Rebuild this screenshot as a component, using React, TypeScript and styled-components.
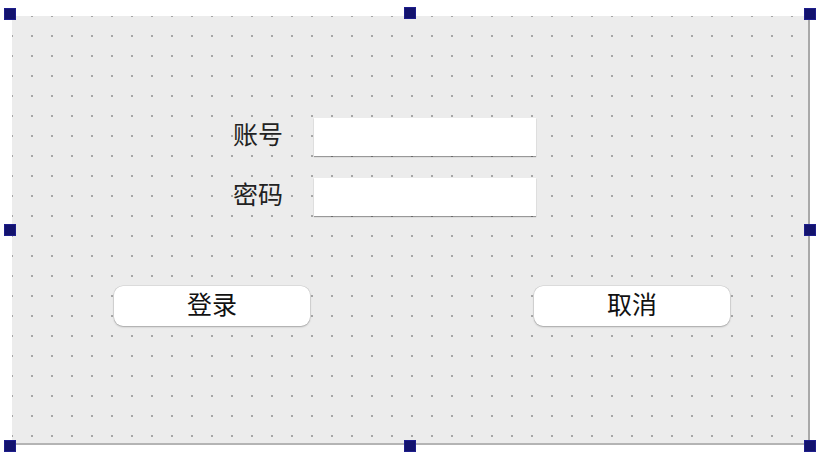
import React from "react";
import styled, { createGlobalStyle } from "styled-components";

const GlobalStyle = createGlobalStyle`
  html, body {
    margin: 0;
    padding: 0;
    background: #ffffff;
  }
  body {
    font-family: "Noto Sans CJK SC", "Noto Sans", sans-serif;
  }
`;

const Stage = styled.div`
  position: relative;
  width: 826px;
  height: 464px;
  overflow: hidden;
  background: #ffffff;
`;

const Form = styled.div`
  margin: 16px 0 0 12px;
  width: 798px;
  height: 429px;
  box-sizing: border-box;
  border-right: 2px solid #a9a9a9;
  border-bottom: 2px solid #b4b4b4;
  background-color: #ececec;
  background-image: radial-gradient(circle, #a6a6a6 0.9px, transparent 1.4px);
  background-size: 20px 20px;
  background-position: -10px -10px;
  padding: 102px 0 0 102px;
`;

const Fields = styled.div`
  display: grid;
  grid-template-columns: 170px 222px;
  column-gap: 30px;
  row-gap: 22px;
  align-items: center;
`;

const Label = styled.div`
  justify-self: end;
  font-size: 25px;
  line-height: 32px;
  color: #222222;
  margin-top: -9px;
  margin-right: 1px;
`;

const Input = styled.div`
  height: 38px;
  background: #ffffff;
  box-shadow: 0 1px 1px rgba(0, 0, 0, 0.35);
`;

const Buttons = styled.div`
  display: flex;
  gap: 224px;
  margin-top: 70px;
`;

const Button = styled.div`
  width: 196px;
  height: 40px;
  border-radius: 9px;
  background: #ffffff;
  box-shadow: 0 0 0 0.5px rgba(0, 0, 0, 0.12), 0 1px 2px rgba(0, 0, 0, 0.25);
  display: flex;
  align-items: center;
  justify-content: center;
  font-size: 25px;
  color: #111111;
  padding-bottom: 7px;
  box-sizing: border-box;
`;

const Handle = styled.div<{ $x: number; $y: number }>`
  position: absolute;
  left: ${(p) => p.$x}px;
  top: ${(p) => p.$y}px;
  width: 12px;
  height: 12px;
  background: #13136e;
  box-shadow: inset 0 0 0 1px #1e1e8c;
`;

const handles = [
  [4, 8],
  [404, 7],
  [804, 8],
  [4, 224],
  [804, 224],
  [4, 440],
  [404, 440],
  [804, 440],
];

export default function App() {
  return (
    <Stage>
      <GlobalStyle />
      <Form>
        <Fields>
          <Label>账号</Label>
          <Input />
          <Label>密码</Label>
          <Input />
        </Fields>
        <Buttons>
          <Button>登录</Button>
          <Button>取消</Button>
        </Buttons>
      </Form>
      {handles.map(([x, y], i) => (
        <Handle key={i} $x={x} $y={y} />
      ))}
    </Stage>
  );
}
